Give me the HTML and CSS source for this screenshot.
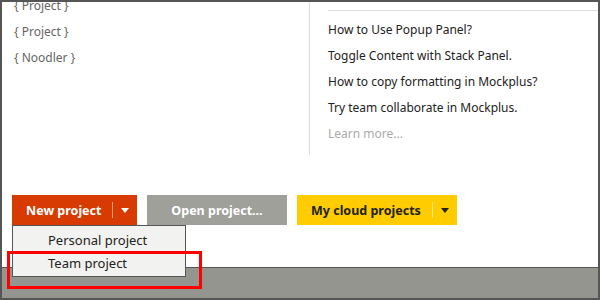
FILE: index.html
```html
<!DOCTYPE html>
<html lang="en">
<head>
    <meta charset="UTF-8">
    <title>Mockplus - Start</title>
    <link rel="stylesheet" href="styles.css">
</head>
<body>

<div class="frame">
    <div class="main">
        <div class="columns">
            <div class="recent">
                <div class="recent-item">{ Project }</div>
                <div class="recent-item">{ Project }</div>
                <div class="recent-item">{ Noodler }</div>
            </div>
            <div class="tips">
                <div class="tips-list">
                    <a class="tip" href="#">How to Use Popup Panel?</a>
                    <a class="tip" href="#">Toggle Content with Stack Panel.</a>
                    <a class="tip" href="#">How to copy formatting in Mockplus?</a>
                    <a class="tip" href="#">Try team collaborate in Mockplus.</a>
                    <a class="tip muted" href="#">Learn more...</a>
                </div>
            </div>
        </div>

        <div class="actions">
            <div class="split split-red">
                <span class="split-label">New project</span>
                <span class="split-arrow">
                    <svg width="8" height="5" viewBox="0 0 8 5"><path d="M0 0h8L4 5z" fill="currentColor"/></svg>
                </span>

                <!-- dropdown is open -->
                <div class="menu">
                    <div class="menu-item">Personal project</div>
                    <div class="menu-item">Team project</div>
                    <div class="highlight"></div>
                </div>
            </div>
            <button class="btn btn-gray">Open project...</button>
            <div class="split split-yellow">
                <span class="split-label">My cloud projects</span>
                <span class="split-arrow">
                    <svg width="8" height="5" viewBox="0 0 8 5"><path d="M0 0h8L4 5z" fill="currentColor"/></svg>
                </span>
            </div>
        </div>
    </div>
    <div class="footer"></div>
</div>

</body>
</html>
```

FILE: styles.css
```css
body {
    margin: 0;
    font-family: 'Noto Sans', 'Liberation Sans', sans-serif;
    background-color: white;
}
.frame {
    width: 600px;
    height: 300px;
    box-sizing: border-box;
    border: 2px solid #555;
    display: flex;
    flex-direction: column;
}
.main {
    height: 265px;
    background-color: white;
    position: relative;
    z-index: 1;
}

/* top part: recent files and tips */
.columns {
    display: flex;
    height: 153px;
    overflow: hidden;
}
.recent {
    width: 307px;
    padding-left: 12px;
    box-sizing: border-box;
    margin-top: -9px;
}
.recent-item {
    height: 26px;
    line-height: 26px;
    font-size: 12px;
    color: #666;
}
.tips {
    flex: 1;
    border-left: 1px solid #ddd;
    padding-left: 18px;
}
.tips-list {
    margin-top: 8px;
    border-top: 1px solid #ddd;
    padding-top: 6px;
}
.tip {
    display: block;
    height: 26px;
    line-height: 26px;
    font-size: 12px;
    color: #222;
    text-decoration: none;
}
.tip.muted {
    color: #aaa;
}

/* buttons */
.actions {
    display: flex;
    gap: 10px;
    margin-top: 40px;
    padding-left: 10px;
}
.btn, .split {
    height: 30px;
    font-family: inherit;
    font-size: 12.5px;
    font-weight: bold;
    border: none;
    padding: 0;
    box-sizing: border-box;
    white-space: nowrap;
}
.btn-gray {
    width: 140px;
    background-color: #a0a09b;
    color: white;
}
.split {
    display: flex;
    align-items: center;
    position: relative;
}
.split-label {
    flex: 1;
    padding-left: 14px;
}
.split-arrow {
    display: flex;
    align-items: center;
    flex-shrink: 0;
    height: 16px;
    padding: 0 8px;
    border-left: 1px solid;
}
.split-red {
    width: 125px;
    background-color: #d83b01;
    color: white;
}
.split-red .split-arrow {
    border-color: #ef9a7a;
}
.split-yellow {
    width: 160px;
    background-color: #ffcc00;
    color: #222;
}
.split-yellow .split-arrow {
    border-color: #ffe680;
}

/* open dropdown */
.menu {
    position: absolute;
    top: 30px;
    left: 0;
    width: 174px;
    box-sizing: border-box;
    border: 1px solid #555;
    background-color: #f2f2f0;
    padding: 3px 0 1px;
    z-index: 5;
}
.menu-item {
    height: 23px;
    line-height: 23px;
    padding-left: 35px;
    font-size: 13px;
    font-weight: normal;
    color: #222;
}
.highlight {
    position: absolute;
    left: -6px;
    top: 25px;
    width: 195px;
    height: 38px;
    box-sizing: border-box;
    border: 3px solid #f00;
}

.footer {
    flex: 1;
    background-color: #95958f;
    border-top: 1px solid #555;
}
```
